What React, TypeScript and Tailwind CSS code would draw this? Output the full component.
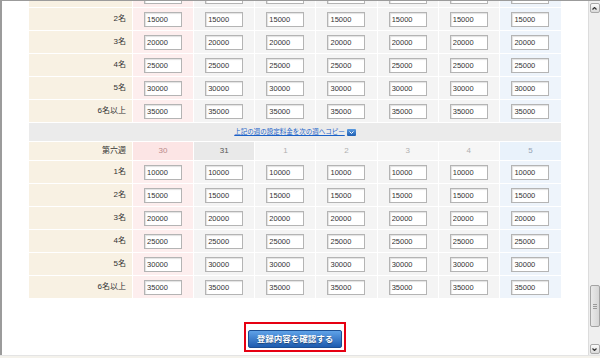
const rows = [
  { label: "1名", value: "10000" },
  { label: "2名", value: "15000" },
  { label: "3名", value: "20000" },
  { label: "4名", value: "25000" },
  { label: "5名", value: "30000" },
  { label: "6名以上", value: "35000" },
];

// 日付ごとの色分け（前月末・当日・通常・週末）
const days = [
  { label: "30", head: "bg-[#fce5e5] text-[#b98a8a]", cell: "bg-[#fdeeee]" },
  { label: "31", head: "bg-[#e9e9e9] text-[#555555]", cell: "bg-[#f4f4f4]" },
  { label: "1", head: "bg-[#f6f6f6] text-[#b0b0b0]", cell: "bg-[#f4f4f4]" },
  { label: "2", head: "bg-[#f6f6f6] text-[#b0b0b0]", cell: "bg-[#f4f4f4]" },
  { label: "3", head: "bg-[#f6f6f6] text-[#b0b0b0]", cell: "bg-[#f4f4f4]" },
  { label: "4", head: "bg-[#f6f6f6] text-[#b0b0b0]", cell: "bg-[#f4f4f4]" },
  { label: "5", head: "bg-[#e9f2fb] text-[#96a3b3]", cell: "bg-[#eef4fb]" },
];

function PriceRow({ label, value }: { label: string; value: string }) {
  return (
    <div className="grid h-[23px] grid-cols-[104px_repeat(7,minmax(0,1fr))] border-b border-white">
      <div className="flex items-center justify-end border-r border-white bg-[#f8f1e3] pr-[6px] text-[8px] text-[#333333]">
        {label}
      </div>
      {days.map((d) => (
        <div
          key={d.label}
          className={`flex items-center justify-center border-r border-white last:border-r-0 ${d.cell}`}
        >
          <input
            readOnly
            value={value}
            className="h-[15px] w-[38px] border border-[#b4b4b4] bg-white pl-[2px] text-[7.5px] text-[#333333] shadow-[inset_1px_1px_1px_rgba(0,0,0,0.12)] outline-none"
          />
        </div>
      ))}
    </div>
  );
}

function HeadRow({ title }: { title: string }) {
  return (
    <div className="grid h-[19px] grid-cols-[104px_repeat(7,minmax(0,1fr))] border-b border-white">
      <div className="flex items-center justify-end border-r border-white bg-[#f8f1e3] pr-[6px] text-[8px] text-[#333333]">
        {title}
      </div>
      {days.map((d) => (
        <div
          key={d.label}
          className={`flex items-center justify-center border-r border-white text-[8px] last:border-r-0 ${d.head}`}
        >
          {d.label}
        </div>
      ))}
    </div>
  );
}

function CopyBar() {
  return (
    <div className="flex h-[19px] items-center justify-center gap-[2px] border-b border-white bg-[#ebebeb]">
      <a className="text-[6.5px] text-[#1a62c8] underline">
        上記の週の設定料金を次の週へコピー
      </a>
      <span className="flex h-[7px] w-[9px] items-center justify-center rounded-[1px] bg-gradient-to-b from-[#5b9be0] to-[#1e5fb3]">
        <svg width="5" height="3" viewBox="0 0 5 3">
          <path d="M0.5 0.5 L2.5 2.5 L4.5 0.5" stroke="white" strokeWidth="1" fill="none" />
        </svg>
      </span>
    </div>
  );
}

function Scrollbar() {
  return (
    <div className="flex w-[12px] flex-col items-center border-l border-[#dcdcdc] bg-[#efefef] pb-[1px] pt-[2px]">
      <div className="flex h-[10px] w-[10px] items-center justify-center rounded-[2px] border border-[#a9a9a9] bg-gradient-to-b from-[#fbfbfb] to-[#dadada]">
        <svg width="5" height="3" viewBox="0 0 5 3">
          <path d="M0.5 2.5 L2.5 0.5 L4.5 2.5" stroke="#333" strokeWidth="1.2" fill="none" />
        </svg>
      </div>
      <div className="flex-1" />
      <div className="flex h-[42px] w-[10px] flex-col items-center justify-center gap-[1px] rounded-[2px] border border-[#a3a3a3] bg-gradient-to-r from-[#e9e9e9] to-[#d6d6d6]">
        <span className="h-px w-[4px] bg-[#9a9a9a]" />
        <span className="h-px w-[4px] bg-[#9a9a9a]" />
        <span className="h-px w-[4px] bg-[#9a9a9a]" />
      </div>
      <div className="h-[17px]" />
      <div className="flex h-[10px] w-[10px] items-center justify-center rounded-[2px] border border-[#a9a9a9] bg-gradient-to-b from-[#fbfbfb] to-[#dadada]">
        <svg width="5" height="3" viewBox="0 0 5 3">
          <path d="M0.5 0.5 L2.5 2.5 L4.5 0.5" stroke="#333" strokeWidth="1.2" fill="none" />
        </svg>
      </div>
    </div>
  );
}

export default function App() {
  return (
    <div
      className="flex h-[358px] w-[600px] flex-col overflow-hidden bg-[#f4f2ec]"
      style={{ fontFamily: '"Liberation Sans", "Noto Sans CJK JP", sans-serif' }}
    >
      <div className="flex min-h-0 flex-1 border-l-2 border-t border-[#9b9b9b] bg-white">
        <main className="min-w-0 flex-1 overflow-hidden">
          <div className="mx-auto -mt-[16px] w-[532px]">
            {rows.map((r) => (
              <PriceRow key={"a" + r.label} label={r.label} value={r.value} />
            ))}
            <CopyBar />
            <HeadRow title="第六週" />
            {rows.map((r) => (
              <PriceRow key={"b" + r.label} label={r.label} value={r.value} />
            ))}
          </div>
          <div className="mt-[23px] flex justify-center">
            <div className="border-2 border-[#e60012] px-[2px] py-[1px]">
              <button className="h-[18px] w-[94px] rounded-[2px] border border-[#1b4f94] bg-gradient-to-b from-[#5fa2e8] to-[#1d5cb0] text-[8.5px] font-bold text-white [text-shadow:0_1px_1px_rgba(0,0,0,0.4)]">
                登録内容を確認する
              </button>
            </div>
          </div>
        </main>
        <Scrollbar />
      </div>
      <div className="h-[3px] border-t border-[#e4e4e4]" />
    </div>
  );
}
